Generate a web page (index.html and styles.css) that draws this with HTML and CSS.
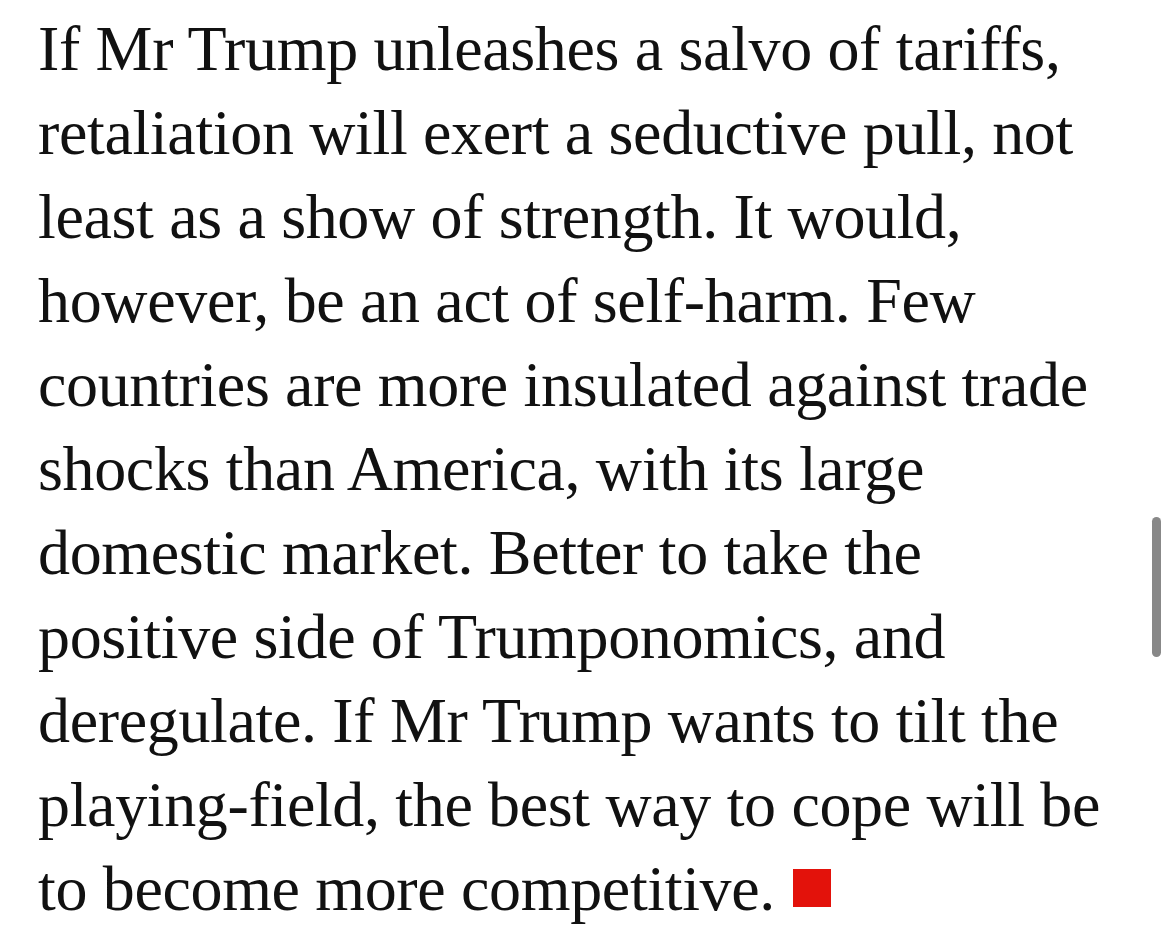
FILE: index.html
```html
<!DOCTYPE html>
<html lang="en">
<head>
<meta charset="utf-8">
<title>Article</title>
<link rel="stylesheet" href="styles.css">
</head>
<body>
<main class="page">
  <article class="article">
    <p class="para">If Mr Trump unleashes a salvo of tariffs,<br>
retaliation will exert a seductive pull, not<br>
least as a show of strength. It would,<br>
however, be an act of self-harm. Few<br>
countries are more insulated against trade<br>
shocks than America, with its large<br>
domestic market. Better to take the<br>
positive side of Trumponomics, and<br>
deregulate. If Mr Trump wants to tilt the<br>
playing-field, the best way to cope will be<br>
to become more competitive. <span class="end-mark" aria-hidden="true"></span></p>
  </article>
  <div class="scrollbar" aria-hidden="true"></div>
</main>
</body>
</html>
```
FILE: styles.css
```css
html, body {
  margin: 0;
  padding: 0;
  background: #ffffff;
}
.page {
  width: 1170px;
  height: 941px;
  overflow: hidden;
  position: relative;
}
.article {
  padding: 7px 0 0 38px;
}
.para {
  margin: 0;
  white-space: nowrap;
  font-family: "Liberation Serif", "Times New Roman", serif;
  font-size: 64px;
  letter-spacing: -0.35px;
  line-height: 84px;
  color: #111111;
}
.end-mark {
  display: inline-block;
  width: 38px;
  height: 38px;
  margin-left: 2px;
  background: #e3120b;
  vertical-align: 3px;
}
.scrollbar {
  position: absolute;
  left: 1152px;
  top: 517px;
  width: 9px;
  height: 140px;
  border-radius: 5px;
  background: #888888;
}
```
